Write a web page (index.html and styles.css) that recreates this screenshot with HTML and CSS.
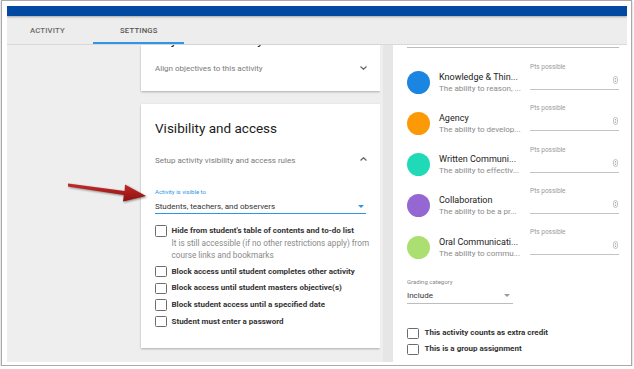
FILE: index.html
```html
<!DOCTYPE html>
<html>
<head>
    <title>Activity Settings</title>
    <link rel="stylesheet" href="styles.css">
</head>
<body>
    <div class="frame">
        <div class="app">
            <div class="topbar"></div>

            <nav class="tabs">
                <a href="#" class="tab">ACTIVITY</a>
                <a href="#" class="tab active">SETTINGS</a>
            </nav>

            <div class="main">
                <section class="pane">
                    <div class="card card-cut">
                        <div class="cut"><h2 class="card-title">Objectives activity</h2></div>
                        <div class="card-row cut-row">
                            <span>Align objectives to this activity</span>
                            <svg class="chevron" width="7" height="4" viewBox="0 0 7 4"><path d="M0.5 0.5 L3.5 3.3 L6.5 0.5" /></svg>
                        </div>
                    </div>

                    <div class="card">
                        <h2 class="card-title">Visibility and access</h2>
                        <div class="card-row">
                            <span>Setup activity visibility and access rules</span>
                            <svg class="chevron up" width="7" height="4" viewBox="0 0 7 4"><path d="M0.5 3.5 L3.5 0.7 L6.5 3.5" /></svg>
                        </div>

                        <label class="field-label focused">Activity is visible to</label>
                        <div class="select focused">
                            <span>Students, teachers, and observers</span>
                            <svg class="caret" width="6" height="3" viewBox="0 0 6 3"><path d="M0 0 H6 L3 3 Z" /></svg>
                        </div>

                        <ul class="checks">
                            <li>
                                <span class="box"></span>
                                <div>
                                    <b>Hide from student's table of contents and to-do list</b>
                                    <p>It is still accessible (if no other restrictions apply) from<br>course links and bookmarks</p>
                                </div>
                            </li>
                            <li><span class="box"></span><b>Block access until student completes other activity</b></li>
                            <li><span class="box"></span><b>Block access until student masters objective(s)</b></li>
                            <li><span class="box"></span><b>Block student access until a specified date</b></li>
                            <li><span class="box"></span><b>Student must enter a password</b></li>
                        </ul>
                    </div>
                </section>

                <div class="scrollbar"></div>

                <aside class="side">
                    <div class="prev-field"></div>

                    <ul class="outcomes">
                        <li class="outcome">
                            <span class="dot blue"></span>
                            <div class="outcome-text">
                                <div class="outcome-name">Knowledge &amp; Thin...</div>
                                <div class="outcome-desc">The ability to reason, ...</div>
                            </div>
                            <div class="pts">
                                <label class="field-label">Pts possible</label>
                                <div class="pts-input"><svg class="spin" width="5" height="8" viewBox="0 0 5 8"><rect x="0.5" y="0.5" width="4" height="7" rx="2" /><path d="M1.5 3.2 L2.5 2 L3.5 3.2 Z M1.5 4.8 L2.5 6 L3.5 4.8 Z" /></svg></div>
                            </div>
                        </li>
                        <li class="outcome">
                            <span class="dot orange"></span>
                            <div class="outcome-text">
                                <div class="outcome-name">Agency</div>
                                <div class="outcome-desc">The ability to develop...</div>
                            </div>
                            <div class="pts">
                                <label class="field-label">Pts possible</label>
                                <div class="pts-input"><svg class="spin" width="5" height="8" viewBox="0 0 5 8"><rect x="0.5" y="0.5" width="4" height="7" rx="2" /><path d="M1.5 3.2 L2.5 2 L3.5 3.2 Z M1.5 4.8 L2.5 6 L3.5 4.8 Z" /></svg></div>
                            </div>
                        </li>
                        <li class="outcome">
                            <span class="dot teal"></span>
                            <div class="outcome-text">
                                <div class="outcome-name">Written Communi...</div>
                                <div class="outcome-desc">The ability to effectiv...</div>
                            </div>
                            <div class="pts">
                                <label class="field-label">Pts possible</label>
                                <div class="pts-input"><svg class="spin" width="5" height="8" viewBox="0 0 5 8"><rect x="0.5" y="0.5" width="4" height="7" rx="2" /><path d="M1.5 3.2 L2.5 2 L3.5 3.2 Z M1.5 4.8 L2.5 6 L3.5 4.8 Z" /></svg></div>
                            </div>
                        </li>
                        <li class="outcome">
                            <span class="dot purple"></span>
                            <div class="outcome-text">
                                <div class="outcome-name">Collaboration</div>
                                <div class="outcome-desc">The ability to be a pr...</div>
                            </div>
                            <div class="pts">
                                <label class="field-label">Pts possible</label>
                                <div class="pts-input"><svg class="spin" width="5" height="8" viewBox="0 0 5 8"><rect x="0.5" y="0.5" width="4" height="7" rx="2" /><path d="M1.5 3.2 L2.5 2 L3.5 3.2 Z M1.5 4.8 L2.5 6 L3.5 4.8 Z" /></svg></div>
                            </div>
                        </li>
                        <li class="outcome">
                            <span class="dot green"></span>
                            <div class="outcome-text">
                                <div class="outcome-name">Oral Communicati...</div>
                                <div class="outcome-desc">The ability to commu...</div>
                            </div>
                            <div class="pts">
                                <label class="field-label">Pts possible</label>
                                <div class="pts-input"><svg class="spin" width="5" height="8" viewBox="0 0 5 8"><rect x="0.5" y="0.5" width="4" height="7" rx="2" /><path d="M1.5 3.2 L2.5 2 L3.5 3.2 Z M1.5 4.8 L2.5 6 L3.5 4.8 Z" /></svg></div>
                            </div>
                        </li>
                    </ul>

                    <label class="field-label grading-label">Grading category</label>
                    <div class="select grading">
                        <span>Include</span>
                        <svg class="caret" width="6" height="3" viewBox="0 0 6 3"><path d="M0 0 H6 L3 3 Z" /></svg>
                    </div>

                    <ul class="checks side-checks">
                        <li><span class="box"></span><b>This activity counts as extra credit</b></li>
                        <li><span class="box"></span><b>This is a group assignment</b></li>
                    </ul>
                </aside>
            </div>

            <!-- annotation arrow drawn over the page -->
            <svg class="arrow" width="95" height="35" viewBox="0 0 95 35">
                <defs>
                    <linearGradient id="arrowFill" x1="0" y1="0" x2="0" y2="1">
                        <stop offset="0" stop-color="#c42a2a" />
                        <stop offset="1" stop-color="#8e0f0f" />
                    </linearGradient>
                </defs>
                <path d="M8 8.6 L64.6 16 L65 9.5 L86 21 L63 26.5 L63.8 20 L8 11.6 Z" fill="url(#arrowFill)" />
            </svg>
        </div>
    </div>
</body>
</html>
```

FILE: styles.css
```css
* {
    box-sizing: border-box;
    margin: 0;
    padding: 0;
}

body {
    font-family: Roboto, "Noto Sans", sans-serif;
    background-color: #fff;
}

ul {
    list-style-type: none;
}

.frame {
    width: 631px;
    margin-left: 1px;
    border: 1px solid #a9a9a9;
    padding: 5px 4px 3px 5px;
    box-shadow: 0 1px 2px rgba(0, 0, 0, 0.3);
}

.app {
    position: relative;
    width: 620px;
    height: 356px;
    display: flex;
    flex-direction: column;
    overflow: hidden;
}

.topbar {
    position: relative;
    z-index: 1;
    height: 10px;
    background-color: #024aa1;
    box-shadow: 0 1px 2px rgba(0, 0, 0, 0.3);
}

.tabs {
    display: flex;
    height: 29px;
    background-color: #ededed;
    border-bottom: 1px solid #d9d9d9;
}

.tab {
    display: flex;
    align-items: center;
    width: 86px;
    padding-left: 23px;
    font-size: 7.7px;
    font-weight: 500;
    letter-spacing: 0.2px;
    color: #6a6a6a;
    text-decoration: none;
}

.tab.active {
    width: 91px;
    padding-left: 27px;
    color: #555;
    box-shadow: inset 0 -2px 0 #2e95e8;
}

.main {
    flex: 1;
    display: flex;
    min-height: 0;
}

.pane {
    width: 373px;
    padding-left: 134px;
    background-color: #eeeeee;
}

.scrollbar {
    width: 13px;
    background-color: #e6e6e6;
    border-left: 3px solid #eeeeee;
}

.side {
    flex: 1;
    padding: 0 8px 0 14px;
    background-color: #fff;
}

/* cards */

.card {
    width: 239px;
    padding: 14px 14px 20px 14px;
    margin-top: 13px;
    background-color: #fff;
    box-shadow: 0 1px 2px rgba(0, 0, 0, 0.28);
}

.card-cut {
    margin-top: 0;
    padding-top: 0;
    padding-bottom: 3px;
}

.cut {
    height: 3px;
    overflow: hidden;
}

.cut .card-title {
    margin-top: -14px;
    line-height: 17px;
}

.card-title {
    font-size: 13.5px;
    font-weight: 400;
    line-height: 20px;
    color: #212121;
}

.card-row {
    display: flex;
    justify-content: space-between;
    align-items: center;
    height: 20px;
    margin-top: 12px;
    font-size: 8px;
    color: #7a7a7a;
}

.cut-row {
    height: 40px;
    margin-top: 0;
}

.chevron {
    fill: none;
    stroke: #666;
    stroke-width: 1.2;
    margin-right: -1px;
}

.chevron.up {
    margin-top: -3px;
}

/* fields */

.field-label {
    display: block;
    margin-top: 18px;
    font-size: 6px;
    line-height: 8px;
    color: #888;
}

.field-label.focused {
    color: #2e95e8;
}

.select {
    display: flex;
    justify-content: space-between;
    align-items: center;
    height: 15px;
    margin-top: 3px;
    padding-right: 2px;
    font-size: 8px;
    color: #333;
    border-bottom: 1px solid #bdbdbd;
}

.select.focused {
    border-bottom: 1.5px solid #2e95e8;
}

.select .caret {
    fill: #2e95e8;
}

.select.grading {
    width: 106px;
    height: 17px;
    margin-top: 1px;
    padding-right: 3px;
}

.select.grading .caret {
    fill: #999;
}

/* checkboxes */

.checks {
    display: flex;
    flex-direction: column;
    gap: 4.7px;
    margin-top: 11px;
}

.checks li {
    display: flex;
    align-items: flex-start;
    gap: 5px;
    font-size: 8px;
    line-height: 12px;
    color: #333;
}

.checks b {
    white-space: nowrap;
}

.checks p {
    font-size: 8.2px;
    color: #8a8a8a;
    white-space: nowrap;
}

.box {
    flex: none;
    width: 11.5px;
    height: 11.5px;
    margin-top: 0.2px;
    border: 1.3px solid #6b6b6b;
    border-radius: 1.5px;
    background-color: #fff;
}

.side-checks {
    gap: 4px;
    margin-top: 23px;
}

.side-checks li {
    gap: 6px;
}

/* outcomes */

.prev-field {
    margin-top: 2px;
    border-top: 1px solid #bdbdbd;
}

.outcomes {
    margin-top: 13.5px;
}

.outcome {
    display: flex;
    align-items: flex-start;
    height: 41.3px;
}

.dot {
    flex: none;
    width: 23px;
    height: 23px;
    margin-top: 9px;
    border-radius: 50%;
}

.dot.blue { background-color: #1b85e2; }
.dot.orange { background-color: #fb9a06; }
.dot.teal { background-color: #20dab7; }
.dot.purple { background-color: #9467d3; }
.dot.green { background-color: #acdf72; }

.outcome-text {
    width: 84px;
    margin: 10px 0 0 9px;
    white-space: nowrap;
}

.outcome-name {
    font-size: 9px;
    line-height: 11px;
    color: #222;
}

.outcome-desc {
    font-size: 8px;
    line-height: 11px;
    color: #8a8a8a;
}

.pts {
    width: 89px;
    margin-left: 7px;
    padding-top: 1.5px;
}

.pts .field-label {
    margin-top: 0;
    font-size: 6.5px;
    color: #999;
}

.pts-input {
    display: flex;
    justify-content: flex-end;
    align-items: center;
    height: 19px;
    padding-right: 1px;
    border-bottom: 1px solid #c4c4c4;
}

.spin rect {
    fill: #fff;
    stroke: #b5b5b5;
    stroke-width: 0.8;
}

.spin path {
    fill: #888;
}

.grading-label {
    margin-top: 10.5px;
}

/* annotation */

.arrow {
    position: absolute;
    left: 53px;
    top: 169px;
    filter: drop-shadow(1px 1px 1px rgba(0, 0, 0, 0.45));
}
```
